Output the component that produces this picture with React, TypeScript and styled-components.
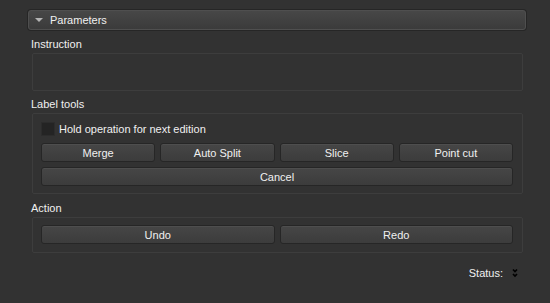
import React from "react";
import styled, { createGlobalStyle } from "styled-components";

const GlobalStyle = createGlobalStyle`
  html, body {
    margin: 0;
    padding: 0;
    background: #323232;
  }
  body {
    font-family: "Liberation Sans", Arial, sans-serif;
    font-size: 11px;
    color: #f0f0f0;
  }
`;

const Page = styled.div`
  width: 550px;
  height: 303px;
  box-sizing: border-box;
  padding: 10px 24px 0 28px;
  background: #323232;
`;

const Header = styled.div`
  height: 20px;
  box-sizing: border-box;
  display: flex;
  align-items: center;
  gap: 7px;
  padding-left: 6px;
  border: 1px solid #4f4f4f;
  border-radius: 3px;
  background: linear-gradient(#474747, #3b3b3b);
  box-shadow: 0 0 0 1px #262626;
`;

const Arrow = styled.span`
  width: 0;
  height: 0;
  border-left: 4px solid transparent;
  border-right: 4px solid transparent;
  border-top: 4px solid #b4b4b4;
`;

const Body = styled.div`
  display: flex;
  flex-direction: column;
  padding: 0 3px 0 4px;
`;

const Label = styled.div<{ $top: number }>`
  height: 14px;
  line-height: 14px;
  margin: ${(p) => p.$top}px 0 2px -1px;
`;

const Group = styled.div<{ $height: number }>`
  height: ${(p) => p.$height}px;
  box-sizing: border-box;
  border: 1px solid #3d3d3d;
  border-radius: 2px;
  padding: 7px 9px 0 8px;
`;

const CheckRow = styled.label`
  display: flex;
  align-items: center;
  gap: 4px;
  height: 14px;
  margin: 1px 0 7px;
`;

const Check = styled.span`
  width: 14px;
  height: 14px;
  box-sizing: border-box;
  background: #242424;
  border: 1px solid #2c2c2c;
`;

const ButtonGrid = styled.div<{ $cols: number }>`
  display: grid;
  grid-template-columns: repeat(${(p) => p.$cols}, 1fr);
  gap: 5px;
`;

const Button = styled.button<{ $span?: number }>`
  grid-column: span ${(p) => p.$span ?? 1};
  height: 19px;
  padding: 0;
  font-family: inherit;
  font-size: 11px;
  color: #f0f0f0;
  border: 1px solid #262626;
  border-radius: 3px;
  background: linear-gradient(#464646, #3c3c3c);
  box-shadow: inset 0 1px 0 #4e4e4e;
`;

const StatusRow = styled.div`
  display: flex;
  justify-content: flex-end;
  align-items: center;
  gap: 9px;
  margin-top: 13px;
  padding-right: 5px;
  height: 14px;
`;

const Chevrons = () => (
  <svg width="6" height="11" viewBox="0 0 6 11">
    <polyline points="1,1.5 3,3.5 5,1.5" fill="none" stroke="#000" strokeWidth="1.7" />
    <polyline points="1,6 3,8 5,6" fill="none" stroke="#000" strokeWidth="1.7" />
  </svg>
);

const App = (): JSX.Element => (
  <Page>
    <GlobalStyle />
    <Header>
      <Arrow />
      <span>Parameters</span>
    </Header>
    <Body>
      <Label $top={7}>Instruction</Label>
      <Group $height={38} />
      <Label $top={6}>Label tools</Label>
      <Group $height={81}>
        <CheckRow>
          <Check />
          Hold operation for next edition
        </CheckRow>
        <ButtonGrid $cols={4}>
          <Button>Merge</Button>
          <Button>Auto Split</Button>
          <Button>Slice</Button>
          <Button>Point cut</Button>
          <Button $span={4}>Cancel</Button>
        </ButtonGrid>
      </Group>
      <Label $top={7}>Action</Label>
      <Group $height={36}>
        <ButtonGrid $cols={2}>
          <Button>Undo</Button>
          <Button>Redo</Button>
        </ButtonGrid>
      </Group>
      <StatusRow>
        <span>Status:</span>
        <Chevrons />
      </StatusRow>
    </Body>
  </Page>
);

export default App;
